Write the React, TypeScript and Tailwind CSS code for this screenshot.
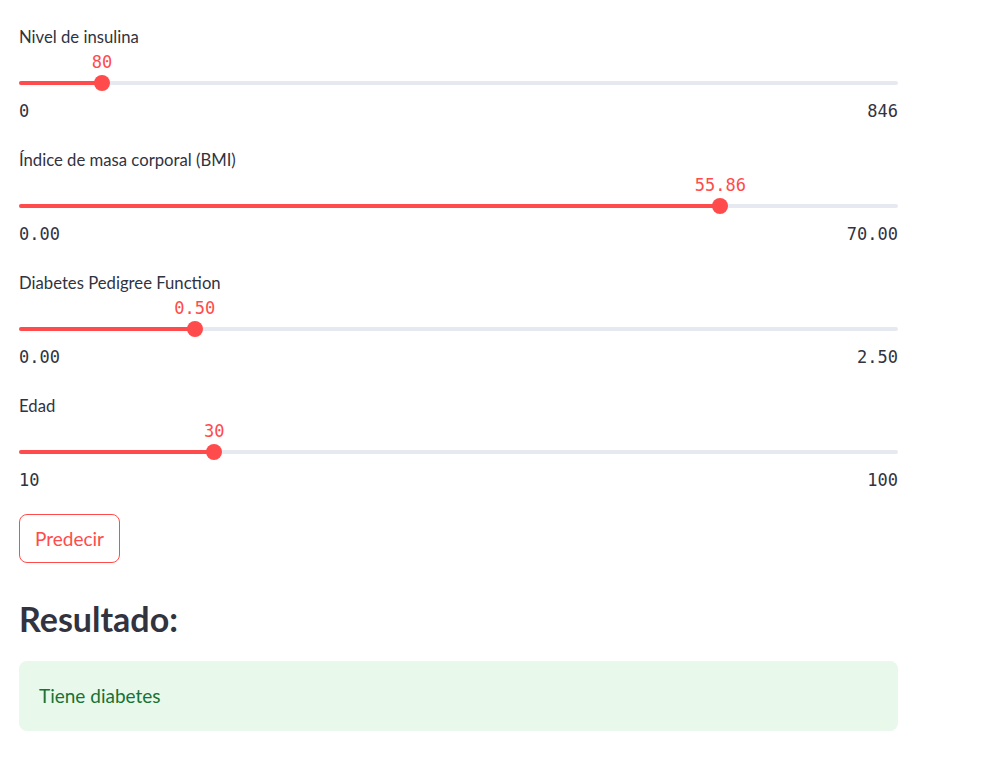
import React from 'react';

type SliderProps = {
  label: string;
  value: number;
  min: number;
  max: number;
  decimals?: number;
};

const fmt = (n: number, d: number) => n.toFixed(d);

const Slider = ({ label, value, min, max, decimals = 0 }: SliderProps) => {
  const pct = ((value - min) / (max - min)) * 100;

  return (
    <div className="mb-[29px]">
      <div className="h-5 text-[16.7px] leading-5 text-[#31333f]">{label}</div>
      <div className="relative h-[44px]">
        <div
          className="absolute top-[5px] -translate-x-1/2 whitespace-nowrap font-['DejaVu_Sans_Mono',monospace] text-[17px] leading-5 text-[#ff4b4b]"
          style={{ left: `${pct}%` }}
        >
          {fmt(value, decimals)}
        </div>
        <div className="absolute inset-x-0 top-[34px] h-1 rounded-full bg-[#e6e9ef]">
          <div className="h-full rounded-full bg-[#ff4b4b]" style={{ width: `${pct}%` }} />
        </div>
        <div
          className="absolute top-[28px] h-4 w-4 -translate-x-1/2 rounded-full bg-[#ff4b4b]"
          style={{ left: `${pct}%` }}
        />
      </div>
      <div className="mt-[10px] flex h-5 justify-between font-['DejaVu_Sans_Mono',monospace] text-[17px] leading-5 text-[#31333f]">
        <span>{fmt(min, decimals)}</span>
        <span>{fmt(max, decimals)}</span>
      </div>
    </div>
  );
};

export default function App() {
  return (
    <div className="min-h-screen bg-white font-['Lato','Noto_Sans',sans-serif]">
      <div className="ml-[19px] w-[879px] pt-[27px]">
        <Slider label="Nivel de insulina" value={80} min={0} max={846} />
        <Slider label="Índice de masa corporal (BMI)" value={55.86} min={0} max={70} decimals={2} />
        <Slider label="Diabetes Pedigree Function" value={0.5} min={0} max={2.5} decimals={2} />
        <div className="-mb-[5px]">
          <Slider label="Edad" value={30} min={10} max={100} />
        </div>

        <button className="h-[49px] rounded-lg border border-[#ff4b4b] px-[15px] text-[19px] leading-6 text-[#ff4b4b]">
          Predecir
        </button>

        <h3 className="mt-[36px] text-[34px] font-bold leading-[40px] text-[#31333f]">Resultado:</h3>

        <div className="mt-[22px] flex h-[70px] items-center rounded-lg bg-[#e8f9ec] px-5 text-[19px] text-[#177233]">
          Tiene diabetes
        </div>
      </div>
    </div>
  );
}
